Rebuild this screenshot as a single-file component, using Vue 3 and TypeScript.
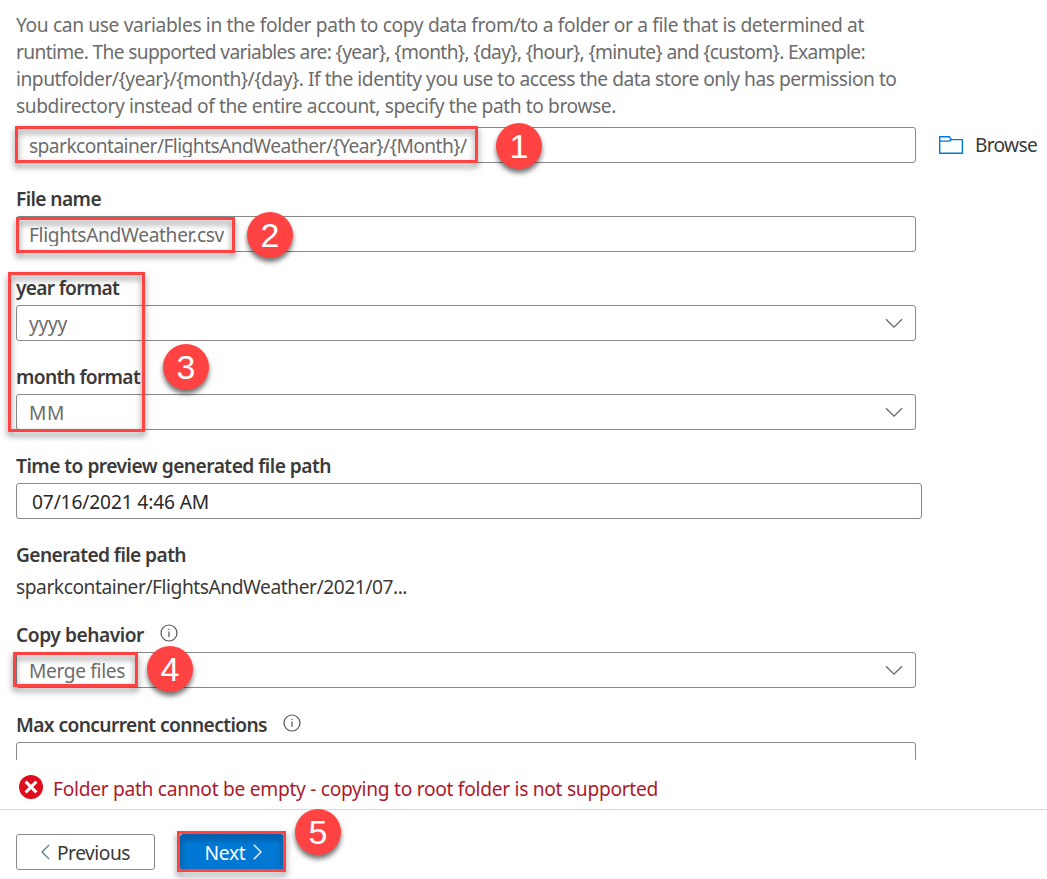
<script setup lang="ts">
import type { Directive } from 'vue'

// Tracks a single line of text out (or in) to the given width in pixels.
const vFit: Directive<HTMLElement, number> = {
  mounted(el, { value }) {
    const natural = el.getBoundingClientRect().width
    const count = (el.textContent ?? '').trim().length
    el.style.letterSpacing = `${(value - natural) / count}px`
  },
}

const intro: { text: string; width: number }[] = [
  { text: 'You can use variables in the folder path to copy data from/to a folder or a file that is determined at', width: 848 },
  { text: 'runtime. The supported variables are: {year}, {month}, {day}, {hour}, {minute} and {custom}. Example:', width: 849 },
  { text: 'inputfolder/{year}/{month}/{day}. If the identity you use to access the data store only has permission to', width: 880.5 },
  { text: 'subdirectory instead of the entire account, specify the path to browse.', width: 600 },
]

const steps = [1, 2, 3, 4, 5]
</script>

<template>
  <div class="page">
    <main class="form">
      <div class="intro">
        <div v-for="line in intro" :key="line.text"><span v-fit="line.width" class="t">{{ line.text }}</span></div>
      </div>
      <div class="path-row">
        <div class="box input"><span class="clip"><span v-fit="437.5" class="t">sparkcontainer/FlightsAndWeather/{Year}/{Month}/</span></span></div>
        <div class="browse">
          <svg width="26" height="20" viewBox="0 0 26 20" fill="none" stroke="#0078d4" stroke-width="1.4" stroke-linejoin="round">
            <path d="M1.7 18.3V1.7H11.2L13.4 4.6H24.4V18.3Z" />
            <path d="M1.7 6.1H11.2L13.4 4.6" />
          </svg>
          <span v-fit="62" class="t">Browse</span>
        </div>
      </div>

      <div class="label"><span v-fit="85" class="t">File name</span></div>
      <div class="box input"><span class="clip"><span v-fit="195" class="t">FlightsAndWeather.csv</span></span></div>

      <div class="label"><span v-fit="103" class="t">year format</span></div>
      <div class="box select">
        <span v-fit="38" class="t">yyyy</span>
        <svg class="chev" width="18" height="11" viewBox="0 0 18 11"><path d="M1 1.2L9 9.2L17 1.2" /></svg>
      </div>

      <div class="label"><span v-fit="124" class="t">month format</span></div>
      <div class="box select">
        <span v-fit="36" class="t">MM</span>
        <svg class="chev" width="18" height="11" viewBox="0 0 18 11"><path d="M1 1.2L9 9.2L17 1.2" /></svg>
      </div>

      <div class="label"><span v-fit="315" class="t">Time to preview generated file path</span></div>
      <div class="box date"><span v-fit="177" class="t">07/16/2021 4:46 AM</span></div>

      <div class="label generated"><span v-fit="170" class="t">Generated file path</span></div>
      <div class="value"><span v-fit="391" class="t">sparkcontainer/FlightsAndWeather/2021/07...</span></div>

      <div class="label copy">
        <span v-fit="128" class="t">Copy behavior</span>
        <svg class="info" width="18" height="18" viewBox="0 0 18 18"><circle cx="9" cy="9" r="8" /><path d="M9 7.6V13M9 4.8V6.1" /></svg>
      </div>
      <div class="box select">
        <span v-fit="96" class="t">Merge files</span>
        <svg class="chev" width="18" height="11" viewBox="0 0 18 11"><path d="M1 1.2L9 9.2L17 1.2" /></svg>
      </div>

      <div class="label max">
        <span v-fit="251" class="t">Max concurrent connections</span>
        <svg class="info" width="18" height="18" viewBox="0 0 18 18"><circle cx="9" cy="9" r="8" /><path d="M9 7.6V13M9 4.8V6.1" /></svg>
      </div>
      <div class="box"></div>
    </main>

    <div class="error">
      <svg width="24" height="24" viewBox="0 0 24 24"><circle cx="12" cy="12" r="12" fill="#e00b1c" /><path d="M6.6 6.6L17.4 17.4M17.4 6.6L6.6 17.4" stroke="#fff" stroke-width="3" /></svg>
      <span v-fit="605" class="t">Folder path cannot be empty - copying to root folder is not supported</span>
    </div>

    <footer class="footer">
      <button class="btn prev" type="button">
        <svg width="9" height="16" viewBox="0 0 9 16" fill="none" stroke="#47708f" stroke-width="1.2"><path d="M8.2 .8L1 8L8.2 15.2" /></svg>
        <span v-fit="73" class="t">Previous</span>
      </button>
      <button class="btn next" type="button">
        <span v-fit="41" class="t">Next</span>
        <svg width="9" height="16" viewBox="0 0 9 16" fill="none" stroke="#fff" stroke-width="1.3"><path d="M.8 .8L8 8L.8 15.2" /></svg>
      </button>
    </footer>

    <template v-for="n in steps" :key="n">
      <div :class="['frame', `frame-${n}`]"></div>
      <div :class="['badge', `badge-${n}`]">{{ n }}</div>
    </template>
  </div>
</template>

<style>
body {
  margin: 0;
  background: #fff;
}
</style>

<style scoped>
.page {
  position: relative;
  width: 1047px;
  height: 879px;
  overflow: hidden;
  background: #fff;
  font: 400 19.2px/27px "Noto Sans", "Open Sans", sans-serif;
  color: #3b3a39;
}
.t {
  display: inline-block;
  white-space: nowrap;
}
.form {
  box-sizing: border-box;
  height: 760px;
  padding: 11px 0 0 16px;
  overflow: hidden;
}
.intro {
  height: 108px;
  margin-bottom: 8px;
  color: #6c6c6c;
}
.path-row {
  display: flex;
}
.box {
  box-sizing: border-box;
  display: flex;
  align-items: center;
  flex: none;
  width: 900px;
  height: 36px;
  padding: 0 12px;
  border: 1px solid #8a8886;
  border-radius: 3px;
  color: #6c6c6c;
}
.input {
  align-items: flex-start;
}
.clip {
  height: 25px;
  margin-top: 4px;
  overflow: hidden;
}
.select {
  justify-content: space-between;
}
.chev {
  fill: none;
  stroke: #666;
  stroke-width: 1.3;
}
.date {
  width: 906px;
  padding-left: 15px;
  color: #292827;
}
.browse {
  display: flex;
  align-items: center;
  gap: 11px;
  margin-left: 22px;
}
.browse .t {
  margin-top: -2px;
}
.label {
  box-sizing: border-box;
  display: flex;
  height: 53px;
  padding-top: 22px;
  font-weight: 600;
}
.generated {
  height: 54px;
}
.value {
  height: 27px;
}
.value .t {
  margin-top: -1px;
}
.copy {
  height: 52px;
  padding-top: 21px;
}
.max {
  height: 54px;
  padding-top: 23px;
}
.info {
  margin: 3px 0 0 16px;
  fill: none;
  stroke: #555;
  stroke-width: 1.2;
}
.error {
  box-sizing: border-box;
  display: flex;
  align-items: center;
  height: 50px;
  padding: 8px 0 0 19px;
  gap: 10px;
  border-bottom: 1px solid #d9d9d9;
  color: #ac1a2c;
}
.error svg {
  margin-bottom: 4px;
}
.footer {
  display: flex;
  gap: 25px;
  padding: 24px 0 0 16px;
}
.btn {
  box-sizing: border-box;
  display: flex;
  align-items: center;
  justify-content: center;
  gap: 7px;
  height: 36px;
  padding: 0;
  border: 1px solid #8a8886;
  border-radius: 3px;
  background: #fff;
  color: #3b3a39;
  font: inherit;
}
.btn .t {
  padding-top: 1px;
}
.prev {
  width: 139px;
}
.next {
  width: 104px;
  padding-left: 2px;
  border-color: #0078d4;
  background: #0078d4;
  color: #fff;
}
.frame {
  position: absolute;
  box-sizing: border-box;
  border: 3px solid #ff4343;
  filter: drop-shadow(0 4px 3px rgba(0, 0, 0, 0.5));
}
.frame-1 { left: 15px; top: 126px; width: 463px; height: 37px; }
.frame-2 { left: 16px; top: 217px; width: 219px; height: 36px; }
.frame-3 { left: 8px; top: 272px; width: 137px; height: 160px; }
.frame-4 { left: 13px; top: 652px; width: 125px; height: 35px; }
.frame-5 { left: 177px; top: 831px; width: 109px; height: 41px; }
.badge {
  position: absolute;
  width: 46px;
  height: 46px;
  border-radius: 50%;
  background: #ff4343;
  box-shadow: 0 4px 5px rgba(0, 0, 0, 0.55);
  color: #fff;
  font: 34px/46px "Liberation Sans", Arial, sans-serif;
  text-align: center;
}
.badge-1 { left: 496px; top: 123px; }
.badge-2 { left: 247px; top: 212px; }
.badge-3 { left: 163px; top: 344px; }
.badge-4 { left: 147px; top: 646px; }
.badge-5 { left: 295px; top: 809px; }
</style>
